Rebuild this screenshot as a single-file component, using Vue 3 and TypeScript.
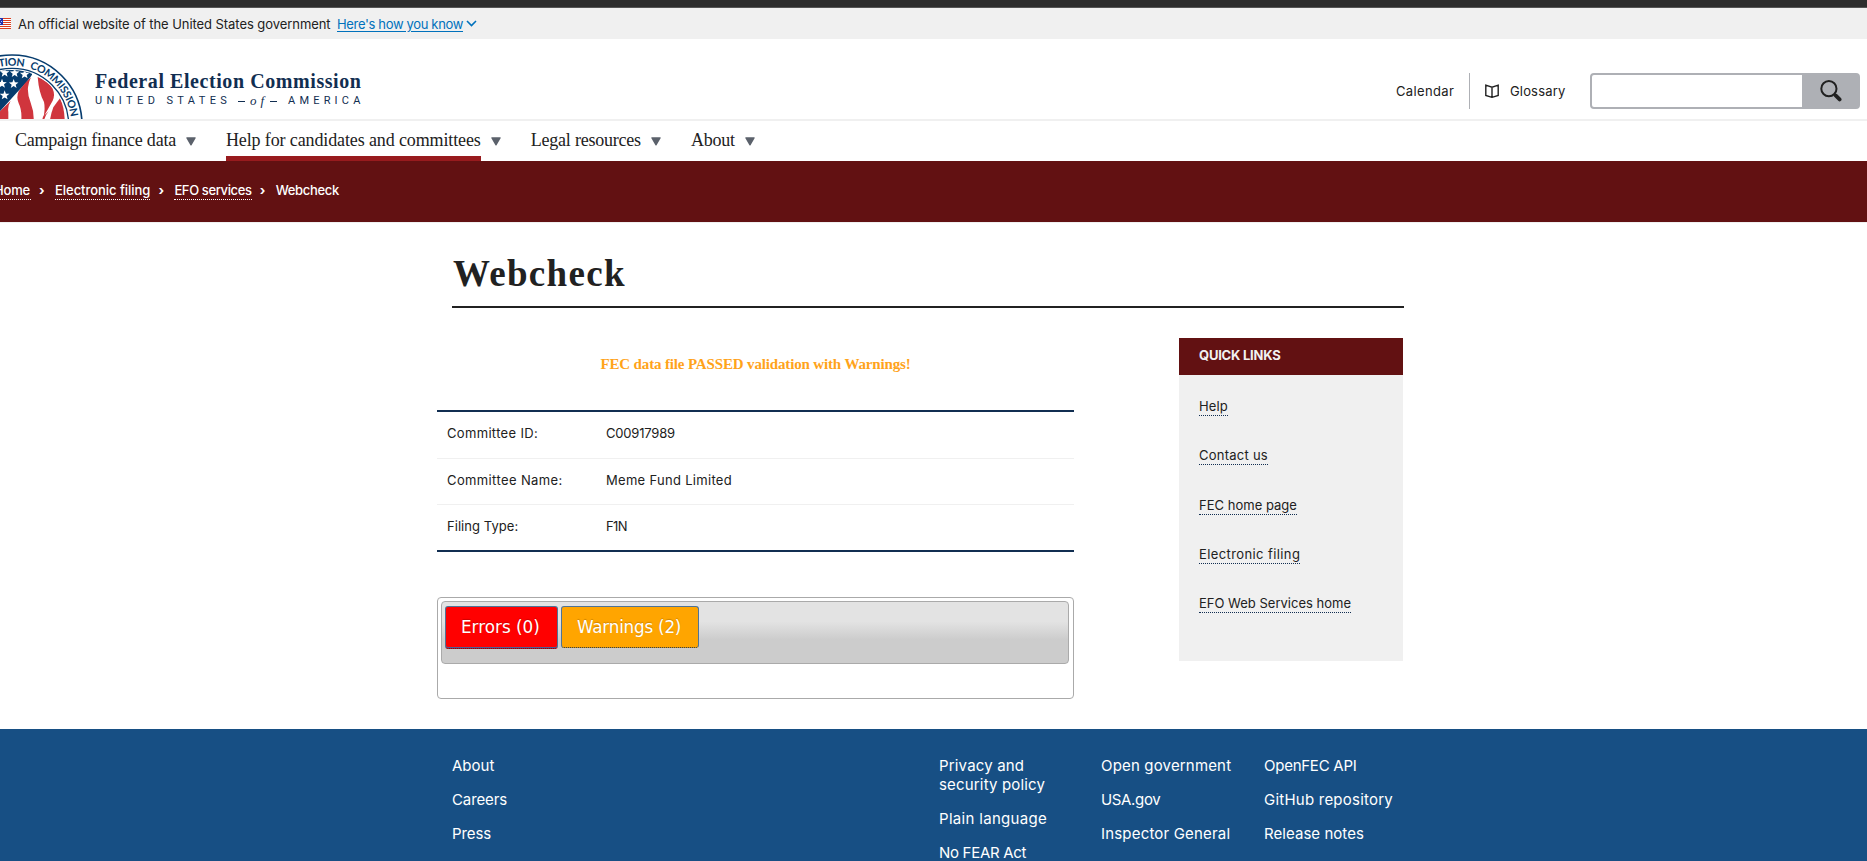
<script setup lang="ts">
interface TrackedText {
  text: string
  /** letter-spacing in px */
  ls: number
}

interface NavItem extends TrackedText {
  active?: boolean
}

const navItems: NavItem[] = [
  { text: 'Campaign finance data', ls: -0.24 },
  { text: 'Help for candidates and committees', ls: -0.12, active: true },
  { text: 'Legal resources', ls: -0.22 },
  { text: 'About', ls: -0.2 },
]

const breadcrumbs: TrackedText[] = [
  { text: 'Home', ls: -0.2 },
  { text: 'Electronic filing', ls: -0.04 },
  { text: 'EFO services', ls: -0.37 },
]

const filing: { label: TrackedText; value: TrackedText }[] = [
  { label: { text: 'Committee ID:', ls: 0.33 }, value: { text: 'C00917989', ls: -0.19 } },
  { label: { text: 'Committee Name:', ls: 0.38 }, value: { text: 'Meme Fund Limited', ls: 0.3 } },
  { label: { text: 'Filing Type:', ls: 0.05 }, value: { text: 'F1N', ls: -0.6 } },
]

const quickLinks: TrackedText[] = [
  { text: 'Help', ls: 0.15 },
  { text: 'Contact us', ls: 0.25 },
  { text: 'FEC home page', ls: 0.02 },
  { text: 'Electronic filing', ls: 0.4 },
  { text: 'EFO Web Services home', ls: 0.01 },
]

const footerColumns: TrackedText[][] = [
  [
    { text: 'About', ls: 0 },
    { text: 'Careers', ls: -0.1 },
    { text: 'Press', ls: -0.1 },
  ],
  [
    { text: 'Privacy and security policy', ls: 0.17 },
    { text: 'Plain language', ls: 0.31 },
    { text: 'No FEAR Act', ls: -0.3 },
  ],
  [
    { text: 'Open government', ls: 0.17 },
    { text: 'USA.gov', ls: -0.35 },
    { text: 'Inspector General', ls: 0.18 },
  ],
  [
    { text: 'OpenFEC API', ls: -0.25 },
    { text: 'GitHub repository', ls: 0.23 },
    { text: 'Release notes', ls: 0.05 },
  ],
]

const tracking = (item: TrackedText) => ({ letterSpacing: `${item.ls}px` })

/** Points of a five-pointed star centred on (cx, cy). */
function star(cx: number, cy: number, r: number): string {
  return Array.from({ length: 10 }, (_, i) => {
    const radius = i % 2 === 0 ? r : r * 0.42
    const angle = (Math.PI / 5) * i - Math.PI / 2
    return `${(cx + radius * Math.cos(angle)).toFixed(1)},${(cy + radius * Math.sin(angle)).toFixed(1)}`
  }).join(' ')
}

const stars = [
  [14, 218], [44, 219], [74, 223], [6, 251], [41, 252], [14, 286], [-16, 280],
].map(([x, y]) => star(x, y, 15))
</script>

<template>
  <div class="page">
    <div class="topbar"></div>

    <div class="banner">
      <svg class="flag" viewBox="0 0 11 11" width="11" height="11">
        <rect width="11" height="11" fill="#fff" />
        <path d="M0 .5h11M0 2.5h11M0 4.5h11M0 6.5h11M0 8.5h11M0 10.5h11" stroke="#db3e1f" />
        <rect width="3" height="7" fill="#1e33b1" />
        <path d="M0 1.5h1M1 3.5h1M0 5.5h1" stroke="#fff" stroke-width=".7" />
      </svg>
      <span class="banner-text">An official website of the United States government</span>
      <a class="banner-link">Here's how you know</a>
      <svg class="chevron" viewBox="0 0 11 7" width="11" height="7">
        <path d="M1 1l4.5 4.5L10 1" fill="none" stroke="#0071bc" stroke-width="1.6" />
      </svg>
    </div>

    <header class="header">
      <svg class="seal" viewBox="0 159 252 198" width="84" height="66">
        <defs>
          <clipPath id="seal-disc"><circle cx="36" cy="375" r="165" /></clipPath>
          <path id="seal-arc" d="M-142 375a178 178 0 0 1 356 0" />
        </defs>
        <circle cx="36" cy="375" r="210" fill="#fff" stroke="#063c6e" stroke-width="5" />
        <circle cx="36" cy="375" r="170" fill="none" stroke="#063c6e" stroke-width="4" />
        <g clip-path="url(#seal-disc)">
          <path d="M-140 200H96V224Q84 244 50 278L0 334V357H-140Z" fill="#063c6e" />
          <polygon v-for="points in stars" :key="points" :points="points" fill="#fff" />
          <g fill="#d0353d">
            <path d="M93 232Q74 248 56 274Q48 292 56 310Q66 330 64 360H101Q102 334 92 308Q82 284 84 262Q86 246 93 232Z" />
            <path d="M113 231Q146 244 158 266Q166 284 158 302L131 350Q136 324 132 306Q117 280 113 231Z" />
            <path d="M180 295Q193 322 194 360H150Q153 340 160 322Q170 308 180 295Z" />
            <path d="M32 303Q22 318 25 336V360H-4V338Q14 320 32 303Z" />
            <path d="M127 356Q130 346 140 340L146 334Q136 346 133 358Z" />
          </g>
        </g>
        <g class="seal-text">
          <text><textPath href="#seal-arc" startOffset="316" text-anchor="end" textLength="144">ELECTION</textPath></text>
          <text><textPath href="#seal-arc" startOffset="333" textLength="202">COMMISSION</textPath></text>
        </g>
      </svg>

      <div class="brand">
        <div class="brand-name">Federal Election Commission</div>
        <div class="brand-sub">
          <span class="brand-us">UNITED STATES</span>
          <span class="brand-of"><i class="dash"></i><em>of</em><i class="dash"></i></span>
          <span class="brand-am">AMERICA</span>
        </div>
      </div>

      <div class="utility">
        <a class="calendar">Calendar</a>
        <a class="glossary">
          <svg viewBox="0 0 14 14" width="14" height="14">
            <path d="M.8 1.2L7 3.2l6.2-2v10.3L7 13.3.8 11.5zM7 3.2v10" fill="none" stroke="#212121" stroke-width="1.4" />
          </svg>
          <span>Glossary</span>
        </a>
        <div class="search">
          <input type="text" class="search-input" aria-label="Search" />
          <button class="search-button" aria-label="Submit search">
            <svg viewBox="0 0 22 22" width="22" height="22">
              <circle cx="8.9" cy="8.7" r="7.6" fill="none" stroke="#212121" stroke-width="2" />
              <path d="M14.2 14l1.6 1.6" stroke="#212121" stroke-width="2" />
              <path d="M15.6 15.4l4 4" stroke="#212121" stroke-width="3.8" stroke-linecap="round" />
            </svg>
          </button>
        </div>
      </div>
    </header>

    <nav class="nav">
      <a v-for="item in navItems" :key="item.text" class="nav-item">
        <span class="nav-label" :class="{ active: item.active }" :style="tracking(item)">{{ item.text }}</span>
        <svg class="caret" viewBox="0 0 10 9" width="10" height="9">
          <path d="M.9 .3h8.2q1 .1.5 1L5.7 8.1q-.7 1-1.4 0L.4 1.3q-.5-.9.5-1z" fill="#5b616b" />
        </svg>
      </a>
    </nav>

    <div class="crumbs">
      <template v-for="crumb in breadcrumbs" :key="crumb.text">
        <a class="crumb" :style="tracking(crumb)">{{ crumb.text }}</a>
        <span class="sep">›</span>
      </template>
      <span class="current">Webcheck</span>
    </div>

    <main class="main">
      <h1 class="title">Webcheck</h1>
      <div class="columns">
        <section class="result">
          <p class="status">FEC data file PASSED validation with Warnings!</p>
          <div class="filing">
            <div v-for="row in filing" :key="row.label.text" class="filing-row">
              <span :style="tracking(row.label)">{{ row.label.text }}</span>
              <span :style="tracking(row.value)">{{ row.value.text }}</span>
            </div>
          </div>
          <div class="tabs">
            <div class="tab-list">
              <a class="tab errors">Errors (0)</a>
              <a class="tab warnings">Warnings (2)</a>
            </div>
          </div>
        </section>

        <aside class="sidebar">
          <h2 class="sidebar-title">QUICK LINKS</h2>
          <ul class="links">
            <li v-for="link in quickLinks" :key="link.text">
              <a class="link" :style="tracking(link)">{{ link.text }}</a>
            </li>
          </ul>
        </aside>
      </div>
    </main>

    <footer class="footer">
      <ul v-for="(column, i) in footerColumns" :key="i" class="footer-col">
        <li v-for="link in column" :key="link.text" :style="tracking(link)">{{ link.text }}</li>
      </ul>
    </footer>
  </div>
</template>

<style>
body {
  overflow: hidden;
}
</style>

<style scoped>
.page {
  height: 861px;
  overflow: hidden;
  display: flex;
  flex-direction: column;
  background: #fff;
  color: #212121;
  font: 13px/20px Inter, 'Liberation Sans', sans-serif;
}
.topbar {
  flex: none;
  height: 7px;
  background: #2d2d2d;
  border-bottom: 1px solid #555;
}
.banner {
  flex: none;
  display: flex;
  align-items: center;
  height: 31px;
  background: #f0f0f0;
}
.banner-text {
  margin-left: 7px;
  width: 319px;
  letter-spacing: -0.06px;
  white-space: nowrap;
}
.banner-link {
  width: 126px;
  color: #0071bc;
  letter-spacing: -0.34px;
  line-height: 16px;
  text-decoration: underline;
  text-underline-offset: 2px;
  white-space: nowrap;
}
.chevron {
  margin-left: 3px;
}

.header {
  flex: none;
  display: flex;
  box-sizing: border-box;
  height: 82px;
  border-bottom: 2px solid #f0f0f0;
}
.seal {
  flex: none;
  margin-top: 14px;
}
.seal-text {
  font: 700 32px Lato, sans-serif;
  fill: #063c6e;
}
.brand {
  width: 270px;
  margin: 29px 0 0 11px;
  color: #112e51;
}
.brand-name {
  font: bold 20px/26px 'Liberation Serif', serif;
  letter-spacing: 0.57px;
  white-space: nowrap;
}
.brand-sub {
  display: flex;
  font-family: Roboto, 'Liberation Sans', sans-serif;
  font-size: 11px;
  line-height: 14px;
}
.brand-us {
  width: 143px;
  letter-spacing: 4.4px;
}
.brand-of {
  display: flex;
  align-items: center;
  width: 50px;
}
.brand-of em {
  margin: 0 2px 0 5px;
  font: italic 13px/14px 'Liberation Serif', serif;
  letter-spacing: 4px;
}
.dash {
  width: 7px;
  height: 1px;
  background: #112e51;
}
.brand-am {
  letter-spacing: 4.2px;
}

.utility {
  display: flex;
  align-items: center;
  height: 36px;
  margin: 34px 7px 0 auto;
}
.calendar {
  box-sizing: border-box;
  width: 74px;
  height: 36px;
  line-height: 36px;
  border-right: 1px solid #aeb0b5;
  letter-spacing: 0.36px;
}
.glossary {
  display: flex;
  align-items: center;
  gap: 11px;
  width: 105px;
  margin-left: 15px;
  letter-spacing: 0.16px;
}
.search {
  display: flex;
  box-sizing: border-box;
  width: 270px;
  height: 36px;
  border: 2px solid #aeb0b5;
  border-radius: 4px;
  background: #aeb0b5;
}
.search-input {
  width: 210px;
  padding: 0;
  border: 0;
  border-radius: 2px 0 0 2px;
  background: #fff;
  outline: 0;
}
.search-button {
  display: flex;
  align-items: center;
  width: 56px;
  padding: 0 0 0 18px;
  border: 0;
  background: #aeb0b5;
}

.nav {
  flex: none;
  display: flex;
  gap: 30px;
  height: 40px;
  padding-left: 15px;
}
.nav-item {
  display: flex;
  gap: 10px;
}
.nav-label {
  box-sizing: border-box;
  height: 40px;
  font: 18px/38px 'Liberation Serif', serif;
  white-space: nowrap;
}
.nav-label.active {
  border-bottom: 5px solid #981b1e;
}
.caret {
  margin-top: 16px;
}

.crumbs {
  flex: none;
  display: flex;
  box-sizing: border-box;
  height: 62px;
  padding-top: 20px;
  border-bottom: 1px solid #f0f0f0;
  background: #621112;
  background-clip: padding-box;
  color: #fff;
  font-weight: 500;
  line-height: 18px;
}
.crumb {
  height: 18px;
  border-bottom: 1px dotted #fff;
  white-space: nowrap;
}
.crumb:first-child {
  width: 37px;
  margin-left: -6px;
}
.sep {
  width: 16px;
  margin-left: 8px;
  font-weight: 700;
}
.current {
  letter-spacing: -0.3px;
}

.main {
  flex: none;
  box-sizing: border-box;
  width: 952px;
  height: 506px;
  margin-left: 452px;
}
.title {
  margin: 0;
  padding: 29px 0 10px 1px;
  border-bottom: 2px solid #212121;
  font: bold 37px/44px 'Liberation Serif', serif;
  letter-spacing: 1.3px;
}
.columns {
  display: flex;
  align-items: flex-start;
  justify-content: space-between;
  margin: 0 1px 0 -15px;
}
.result {
  width: 637px;
}
.status {
  margin: 46px 0 36px;
  color: #ffa31a;
  font: bold 15px/20px 'Liberation Serif', serif;
  letter-spacing: -0.15px;
  text-align: center;
}
.filing {
  border: solid #112e51;
  border-width: 2px 0;
}
.filing-row {
  display: grid;
  grid-template-columns: 159px 1fr;
  padding: 11px 0 14px 10px;
}
.filing-row:first-child {
  padding-bottom: 15px;
}
.filing-row:not(:last-child) {
  border-bottom: 1px solid #f0f0f0;
}
.tabs {
  box-sizing: border-box;
  height: 102px;
  margin-top: 45px;
  padding: 3px 4px 3px 3px;
  border: 1px solid #aaa;
  border-radius: 4px;
}
.tab-list {
  display: flex;
  align-items: flex-start;
  gap: 3px;
  box-sizing: border-box;
  height: 63px;
  padding: 4px 3px;
  border: 1px solid #aaa;
  border-radius: 4px;
  background: linear-gradient(#e3e3e3 32%, #ccc 62%);
}
.tab {
  box-sizing: border-box;
  border: 1px solid #4f7396;
  border-bottom: 1px dotted #112e51;
  border-radius: 3px;
  padding-left: 15px;
  color: #fff;
  font: 16.8px/40px 'DejaVu Sans', sans-serif;
  text-shadow: 0 -1px 1px rgba(0, 0, 0, 0.2);
  white-space: nowrap;
}
.errors {
  width: 113px;
  height: 43px;
  background: red;
  box-shadow: inset 0 -1px #4f5c96;
}
.warnings {
  width: 138px;
  height: 42px;
  background: orange;
  letter-spacing: -0.22px;
}

.sidebar {
  width: 224px;
  height: 323px;
  margin-top: 30px;
  background: #f0f0f0;
}
.sidebar-title {
  box-sizing: border-box;
  height: 37px;
  margin: 0;
  padding: 7px 20px 0;
  background: #621112;
  color: #f1f1f1;
  font-size: 13px;
  font-weight: 700;
  line-height: 20px;
  letter-spacing: -0.22px;
}
.links {
  margin: 0;
  padding: 22px 20px 0;
  list-style: none;
}
.links li {
  height: 49.25px;
}
.link {
  display: inline-block;
  height: 18px;
  line-height: 18px;
  border-bottom: 1px dotted #112e51;
  vertical-align: top;
}

.footer {
  flex: 1;
  display: grid;
  grid-template-columns: 487px 162px 163px 160px;
  padding: 27px 0 0 452px;
  background: #174f84;
  color: #fff;
  font-size: 15px;
  line-height: 19px;
}
.footer-col {
  margin: 0;
  padding: 0;
  list-style: none;
}
.footer-col:nth-child(2) {
  width: 120px;
}
.footer-col li {
  margin-bottom: 15px;
}
</style>
